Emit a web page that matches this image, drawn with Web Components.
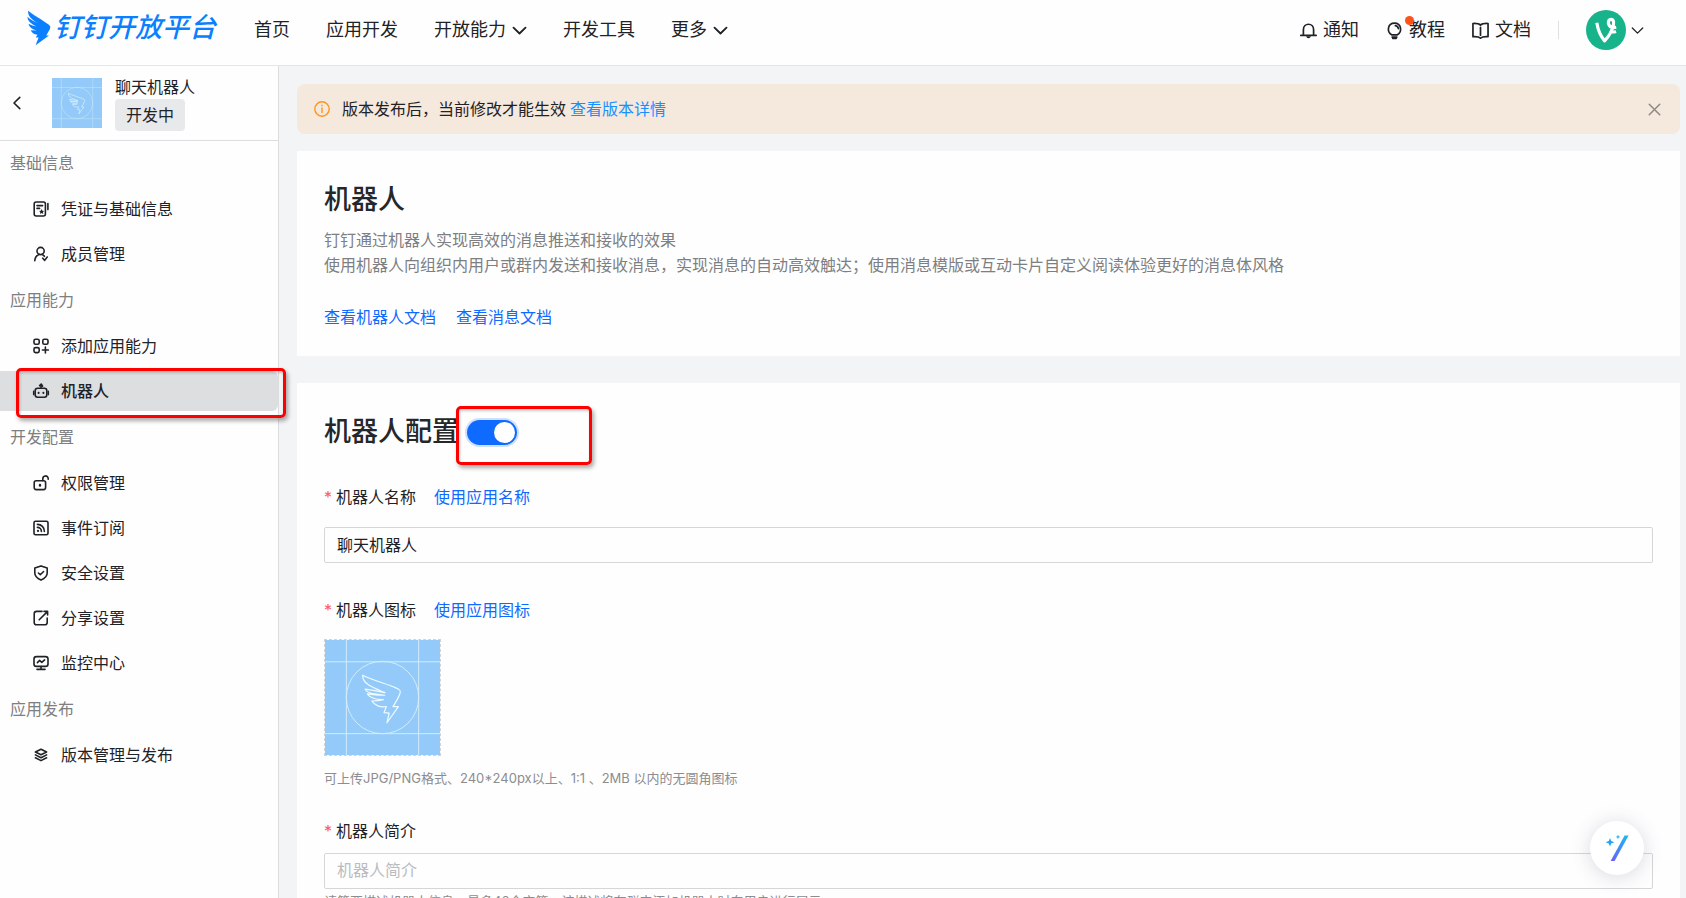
<!DOCTYPE html>
<html lang="zh-CN">
<head>
<meta charset="utf-8">
<title>钉钉开放平台 - 机器人</title>
<style>
html,body{margin:0;height:100%}
body{font-family:Inter,"Noto Sans CJK SC",sans-serif;font-size:16px;line-height:24px;color:#1f2226;background:#f3f4f5;
--blue:#0f6bff;--muted:#7d7f82;--line:#dcdddf}
</style>
</head>
<body>
<open-platform-app></open-platform-app>
<script>
const define = (name, html, setup) => {
  const template = document.createElement('template');
  template.innerHTML = '<style>*,::before,::after{box-sizing:border-box}a{text-decoration:none;color:inherit}button{font:inherit;color:inherit;border:0;background:none;padding:0;cursor:pointer}[hidden]{display:none!important}</style>' + html;
  customElements.define(name, class extends HTMLElement {
    connectedCallback() {
      if (this.shadowRoot) return;
      this.attachShadow({mode: 'open'}).append(template.content.cloneNode(true));
      if (setup) setup(this, this.shadowRoot);
    }
  });
};

const ICONS = {
  credential: '<rect x="1.2" y="1" width="11.2" height="14" rx="2"/><path d="M4 4.6h5.6M4 7.4h2.6M14.9 2.6v6"/><path d="M8.6 8l.8 1.7 1.8.2-1.3 1.2.4 1.8-1.7-.9-1.6.9.3-1.8-1.3-1.2 1.8-.2z" fill="currentColor" stroke="none"/>',
  member: '<circle cx="7.6" cy="5" r="3.6"/><path d="M1.8 14.6c.3-3.4 1.9-5.4 4.4-6.2M9.2 8.4c1 .4 1.7 1 2.2 1.9M9.8 12.2l1.9 2.2 2.5-3.4"/>',
  ability: '<rect x="1" y="1.2" width="5.2" height="5" rx="1.5"/><rect x="9.8" y="1.2" width="5.2" height="5" rx="1.5"/><rect x="1" y="9.6" width="5.2" height="5" rx="1.5"/><path d="M12.4 9v6M9.4 12h6"/>',
  robot: '<rect x="2.2" y="5.2" width="11.6" height="9" rx="2.4"/><path d="M.7 8.4v3.2M15.3 8.4v3.2M8 5V3.4M6.6 2.6L8.2 1l1.4 2.2"/><path d="M5.6 9.7v.2M10.4 9.7v.2" stroke-width="2"/>',
  unlock: '<rect x="1.2" y="5.8" width="11.4" height="8.8" rx="2"/><path d="M9.8 5.6V3.8c0-3.8 5.4-3.8 5.4-.2v.6"/><path d="M7 10v.5" stroke-width="2.4"/>',
  feed: '<rect x="1" y="1.2" width="14" height="13.6" rx="1.6"/><path d="M4.4 4.4c4 0 7 3 7 7M4.4 7.4c2.3 0 4 1.8 4 4"/><path d="M5 10.8v.2" stroke-width="2.2"/>',
  shield: '<path d="M8 .9l6.2 2.2v5c0 3.2-2.6 5.4-6.2 7-3.600-1.600-6.200-3.800-6.200-7v-5z"/><path d="M5.400 8l1.900 1.700 3.300-3.200"/>',
  share: '<path d="M9 1.400H3.600C2 1.400 1.200 2.200 1.200 3.800v8.600c0 1.500.8 2.300 2.400 2.300h8.200c1.600 0 2.400-.8 2.400-2.300V8M6.200 9.800L14.400 1.600M11 1.400h3.600V5"/>',
  monitor: '<rect x="1" y="1.600" width="14" height="9.800" rx="2.400"/><path d="M8 11.600v2.600M4 14.400h8M4.400 7.600L6.600 5.400l2.200 2 2.800-2.600"/>',
  layers: '<path d="M8 2.200l5.600 2.800L8 7.800 2.400 5z"/><path d="M2.400 7.900L8 10.700l5.600-2.800M2.400 10.800L8 13.600l5.600-2.800"/>',
  back: '<path d="M10.800 2.400L5 8l5.800 5.600"/>',
  down: '<path d="M1.600 5l6.400 6.200L14.400 5"/>',
  close: '<path d="M2.400 2.400l11.200 11.200M13.600 2.400L2.400 13.600"/>',
  info: '<circle cx="8" cy="8" r="7.200"/><path d="M8 7v4.600M8 4.300v.4"/>',
  bell: '<path d="M3.200 12.400V7.200c0-6.800 9.600-6.800 9.600 0v5.200M.8 12.600h14.400"/><path d="M5.800 13.400h4.400c-.4 2.400-4 2.400-4.400 0z" fill="currentColor" stroke="none"/>',
  bulb: '<path d="M5.600 12.200C.2 9.400 1.600 1 8 1s7.800 8.400 2.400 11.200z"/><path d="M8.800 3.400c1.700.3 2.600 1.200 2.900 2.800M5.800 14.200h4.400"/><path d="M6.400 15.400h3.200"/>',
  book: '<path d="M8 3C6.600 1.600 4.400 1.200.9 1.400v12.400c3.300-.2 5.700.1 7.100 1.300 1.400-1.200 3.800-1.500 7.100-1.300V1.400C11.600 1.200 9.400 1.600 8 3zM8 5v7.400"/>'
};

define('dt-icon', `
<style>:host{display:inline-flex;flex:none;width:16px;height:16px}svg{width:100%;height:100%;overflow:visible;stroke-width:var(--stroke,1.6)}</style>
<svg viewBox="0 0 16 16" fill="none" stroke="currentColor" stroke-linecap="round" stroke-linejoin="round" aria-hidden="true"></svg>`,
(el, root) => {
  root.querySelector('svg').innerHTML = ICONS[el.getAttribute('name')] || '';
});

define('dt-app-art', `
<style>:host{display:block;background:#93caf9}svg{display:block;width:100%;height:100%}</style>
<svg viewBox="0 0 116 116" fill="none" stroke="#d3edf8" role="img" aria-label="应用图标">
<path d="M21.500 0v116M94.500 0v116M0 22h116M0 94.500h116" stroke-width="1"/>
<circle cx="58" cy="58" r="36.500"/>
<path stroke="#f0fbff" stroke-width="1.200" stroke-linejoin="round" d="M38 35.500C47 40 61 44 72 48.500c4 1.600 4.600 3 3.600 5.500C74 59 71 63 68.600 67.200H74L62.500 83.500l2.200-9.800-5.200-.4 2.400-6.200c-6 1-12-1-14.600-5.600 5-.2 8-.6 11.600-1.400-7 .4-14.200-2-16.200-5.800 7 1.400 12 1.400 17.600 1.400C51 54.500 42 54 40.500 49.500c7 .8 13 2.200 20 3.600C51 49 37.500 45 38 35.500z"/>
</svg>`);

define('dt-logo', `
<style>
:host{display:block}
a{display:flex;align-items:center;gap:3px;color:#0a80ff}
svg{width:24px;height:36px;flex:none}
span{font-size:27px;line-height:40px;font-weight:500;font-style:italic;white-space:nowrap}
</style>
<a href="#"><svg viewBox="0 0 24 36" fill="currentColor" aria-hidden="true"><path d="M1.200.4C4.400 4.400 15 9 21.600 14.600c1.900 1.600 2.200 2.800 1.200 4.600l-3.600 6.200h2.800L8.600 35.200l3-7.600-2.800-.2 1.600-2.600C7 24.400 4.400 22.400 3.800 20.200l6 .4C5.400 19.600 2 17 1.600 13.800c2.400 1.400 5.400 2.200 8 2.600C4 14 .6 11 .4 6.800c3 3 7 5 10.600 6.400C4.600 9.600.4 5.600 1.200.4z"/></svg><span>钉钉开放平台</span></a>`);

define('dt-nav-link', `
<style>
:host{display:block}
a{display:flex;align-items:center;gap:6px;font-size:18px;line-height:26px;white-space:nowrap;position:relative}
dt-icon{width:15px;height:15px;--stroke:2}
.lead{width:17px;height:17px;--stroke:1.6}
i{position:absolute;left:19px;top:-1px;width:9px;height:9px;border-radius:50%;background:#ff5219}
</style>
<a href="#"><dt-icon class="lead" hidden></dt-icon><slot></slot><dt-icon class="arrow" name="down" hidden></dt-icon><i hidden></i></a>`,
(el, root) => {
  const lead = root.querySelector('.lead');
  if (el.hasAttribute('icon')) {
    const icon = document.createElement('dt-icon');
    icon.className = 'lead';
    icon.setAttribute('name', el.getAttribute('icon'));
    lead.replaceWith(icon);
  }
  root.querySelector('.arrow').hidden = !el.hasAttribute('menu');
  root.querySelector('i').hidden = !el.hasAttribute('dot');
});

define('dt-header', `
<style>
:host{display:block;background:#fefefe;border-bottom:1px solid #e4e6e8}
header{display:flex;align-items:center;height:65px;padding:0 42px 5px 27px}
dt-logo{padding-bottom:5px}
nav{display:flex;gap:36px;margin-left:38px}
.tools{display:flex;align-items:center;gap:27px;margin-left:auto}
.rule{width:1px;height:18px;background:#dfe0e2}
.user{display:flex;align-items:center;gap:5px}
.user svg{width:40px;height:40px}
.user dt-icon{width:13px;height:13px}
</style>
<header>
<dt-logo></dt-logo>
<nav><dt-nav-link>首页</dt-nav-link><dt-nav-link>应用开发</dt-nav-link><dt-nav-link menu>开放能力</dt-nav-link><dt-nav-link>开发工具</dt-nav-link><dt-nav-link menu>更多</dt-nav-link></nav>
<div class="tools">
<dt-nav-link icon="bell">通知</dt-nav-link><dt-nav-link icon="bulb" dot>教程</dt-nav-link><dt-nav-link icon="book">文档</dt-nav-link>
<span class="rule"></span>
<button class="user" aria-label="账号"><svg viewBox="0 0 40 40" aria-hidden="true"><circle cx="20" cy="20" r="20" fill="#17b38a"/><path d="M10.800 12.800c1.200 7.200 3.600 13.400 7.800 18 4.400-4.400 7.400-9.800 8.800-15.800.8-3.800-.4-5.600-2.300-5.600-2.600 0-3.300 3-2.300 5.200 1.200 2.600 4 3.400 7.400 2.600M23.600 21.400c2 .8 4.200.8 6.400 0" fill="none" stroke="#fff" stroke-width="3.200" stroke-linejoin="round"/></svg><dt-icon name="down"></dt-icon></button>
</div>
</header>`);

define('dt-app-card', `
<style>
:host{display:block;border-bottom:1px solid var(--line)}
.card{display:flex;align-items:center;height:74px;padding:0 9px}
.back{display:flex;margin-right:27px}
dt-app-art{width:50px;height:50px}
.text{display:flex;flex-direction:column;align-items:flex-start;margin-left:13px}
.badge{padding:4px 11px;border-radius:4px;background:#e7e9eb}
</style>
<div class="card"><button class="back" aria-label="返回"><dt-icon name="back"></dt-icon></button><dt-app-art></dt-app-art>
<div class="text"><span><slot></slot></span><span class="badge"><slot name="status"></slot></span></div></div>`);

define('dt-nav-group', `
<style>
:host{display:block}
h2{margin:0;padding:0 10px;font-size:16px;font-weight:400;line-height:45px;height:47px;color:var(--muted)}
</style>
<h2></h2><nav><slot></slot></nav>`,
(el, root) => { root.querySelector('h2').textContent = el.getAttribute('heading'); });

define('dt-nav-item', `
<style>
:host{display:block;padding:1px 0 4px;position:relative}
a{display:flex;align-items:center;gap:12px;height:40px;padding-left:33px;border-radius:0 6px 6px 0}
:host([current]) a{background:#dddee0;font-weight:500}
:host([current])::after{content:"";box-sizing:border-box;position:absolute;left:16px;right:-8px;top:-2px;height:50px;border:3px solid #f00;border-radius:5px;box-shadow:2px 3px 4px #0005,inset 1px 2px 3px #0003;pointer-events:none}
</style>
<a href="#"></a>`,
(el, root) => {
  root.querySelector('a').innerHTML = '<dt-icon name="' + el.getAttribute('icon') + '"></dt-icon><slot></slot>';
  if (el.hasAttribute('current')) root.querySelector('a').setAttribute('aria-current', 'page');
});

define('dt-sidebar', `
<style>
:host{display:block;width:279px;box-sizing:border-box;flex:none;background:#fefefe;border-right:1px solid var(--line);position:relative;z-index:1}
</style>
<dt-app-card>聊天机器人<span slot="status">开发中</span></dt-app-card>
<dt-nav-group heading="基础信息"><dt-nav-item icon="credential">凭证与基础信息</dt-nav-item><dt-nav-item icon="member">成员管理</dt-nav-item></dt-nav-group>
<dt-nav-group heading="应用能力"><dt-nav-item icon="ability">添加应用能力</dt-nav-item><dt-nav-item icon="robot" current>机器人</dt-nav-item></dt-nav-group>
<dt-nav-group heading="开发配置"><dt-nav-item icon="unlock">权限管理</dt-nav-item><dt-nav-item icon="feed">事件订阅</dt-nav-item><dt-nav-item icon="shield">安全设置</dt-nav-item><dt-nav-item icon="share">分享设置</dt-nav-item><dt-nav-item icon="monitor">监控中心</dt-nav-item></dt-nav-group>
<dt-nav-group heading="应用发布"><dt-nav-item icon="layers">版本管理与发布</dt-nav-item></dt-nav-group>`);

define('dt-alert', `
<style>
:host{display:flex;align-items:center;height:50px;padding:0 18px 0 17px;border-radius:8px;background:#f5e8dd}
.mark{color:#ff9420;--stroke:1.4}
p{flex:1;margin:0 12px}
button{display:flex;color:#8f8984}
button dt-icon{width:15px;height:15px}
</style>
<dt-icon class="mark" name="info"></dt-icon><p><slot></slot></p><button aria-label="关闭"><dt-icon name="close"></dt-icon></button>`);

define('dt-panel', `
<style>:host{display:block;background:#fefefe;padding:29px 27px 27px}</style><slot></slot>`);

define('dt-switch', `
<style>
:host{display:flex;position:relative}
input{appearance:none;display:flex;align-items:center;margin:0;width:50px;height:25px;border-radius:13px;background:#c5c8cc;padding:2px;cursor:pointer}
input::before{content:"";width:21px;height:21px;border-radius:50%;background:#fff}
input:checked{background:var(--blue);justify-content:flex-end;box-shadow:0 0 0 2px #cfe0ff}
:host([marked])::after{content:"";position:absolute;left:-11px;top:-14px;width:136px;height:59px;box-sizing:border-box;border:3px solid #f00;border-radius:5px;box-shadow:2px 3px 4px #0005,inset 1px 2px 3px #0003;pointer-events:none}
</style>
<input type="checkbox" role="switch" aria-label="机器人配置" checked>`);

const fieldHead = `
<style>
:host{display:block}
.head{display:flex;gap:18px}
.head label::before{content:"*";color:#ff5a5c;margin-right:4px}
.head a{color:var(--blue)}
.hint{margin:0;font-size:13px;line-height:20px;color:#8b8d90}
</style>
<div class="head"><label for="control"></label><a href="#"></a></div>`;
const fillHead = (el, root) => {
  root.querySelector('label').textContent = el.getAttribute('label');
  const link = root.querySelector('.head a');
  link.textContent = el.getAttribute('action') || '';
  link.hidden = !el.hasAttribute('action');
  const hint = root.querySelector('.hint');
  hint.textContent = el.getAttribute('hint') || '';
  hint.hidden = !el.hasAttribute('hint');
};

define('dt-text-field', fieldHead + `
<style>
input{display:block;width:100%;height:36px;margin-top:18px;padding:0 12px 2px;border:1px solid #d5d6d8;border-radius:2px;background:#fefefe;font:inherit;color:inherit;outline:0}
:host([compact]) input{margin-top:10px}
input::placeholder{color:#babcbf;opacity:1}
.hint{margin-top:2px}
</style>
<input id="control" type="text"><p class="hint"></p>`,
(el, root) => {
  fillHead(el, root);
  const input = root.querySelector('input');
  input.value = el.getAttribute('value') || '';
  input.placeholder = el.getAttribute('placeholder') || '';
});

define('dt-image-field', fieldHead + `
<style>
button{display:block;width:117px;height:117px;margin-top:17px;border:1px dashed #cfd3d8;overflow:hidden}
dt-app-art{width:100%;height:100%}
.hint{margin-top:12px}
</style>
<button id="control" type="button"><dt-app-art></dt-app-art></button><p class="hint"></p>`, fillHead);

define('dt-assistant', `
<style>
:host{position:fixed;right:42px;bottom:23px}
button{display:flex;align-items:center;justify-content:center;width:54px;height:54px;border-radius:50%;background:#fff;box-shadow:0 2px 20px #3c466e33}
svg{width:24px;height:30px}
</style>
<button aria-label="智能助手"><svg viewBox="0 0 24 30" aria-hidden="true"><defs><linearGradient id="wand" x1="0" y1="0" x2="0" y2="1"><stop stop-color="#1fb5f5"/><stop offset="1" stop-color="#6a62f5"/></linearGradient></defs><path d="M19.600 2.600h4L9.600 28H5.600z" fill="url(#wand)"/><path d="M5 5l1.200 3L9.400 9.200 6.200 10.400 5 13.400 3.800 10.400.6 9.200 3.800 8z" fill="#23a5f2"/><path d="M13 1.600l.7 1.600 1.700.7-1.700.7L13 6.200l-.7-1.600-1.700-.7 1.700-.7z" fill="#27b4f0"/></svg></button>`);

define('dt-robot-page', `
<style>
:host{display:block;padding:18px 6px 27px 18px}
dt-panel+dt-panel{margin-top:27px}
dt-alert{margin-bottom:17px}
dt-alert a{color:#1890ff;margin-left:4px}
h1,h2{margin:0;font-size:27px;line-height:40px;font-weight:500;color:#25272a}
.desc{margin:8px 0 27px;line-height:25px;color:var(--muted)}
.links{display:flex;gap:20px;color:var(--blue)}
.title{display:flex;align-items:center;gap:8px;margin-bottom:33px}
dt-text-field{margin-bottom:35px}
dt-image-field{margin-bottom:31px}
</style>
<dt-alert>版本发布后，当前修改才能生效<a href="#">查看版本详情</a></dt-alert>
<dt-panel><h1>机器人</h1>
<p class="desc">钉钉通过机器人实现高效的消息推送和接收的效果<br>使用机器人向组织内用户或群内发送和接收消息，实现消息的自动高效触达；使用消息模版或互动卡片自定义阅读体验更好的消息体风格</p>
<div class="links"><a href="#">查看机器人文档</a><a href="#">查看消息文档</a></div></dt-panel>
<dt-panel><div class="title"><h2>机器人配置</h2><dt-switch marked></dt-switch></div>
<dt-text-field label="机器人名称" action="使用应用名称" value="聊天机器人"></dt-text-field>
<dt-image-field label="机器人图标" action="使用应用图标" hint="可上传JPG/PNG格式、240*240px以上、1:1 、2MB 以内的无圆角图标"></dt-image-field>
<dt-text-field compact label="机器人简介" placeholder="机器人简介" hint="请简要描述机器人信息，最多40个字符，该描述将在群内添加机器人时向用户进行展示"></dt-text-field></dt-panel>`);

define('open-platform-app', `
<style>
:host{display:flex;flex-direction:column;height:100vh}
.body{display:flex;flex:1;min-height:0}
main{flex:1;min-width:0;overflow-y:auto;scrollbar-width:none}
</style>
<dt-header></dt-header>
<div class="body"><dt-sidebar></dt-sidebar><main><dt-robot-page></dt-robot-page></main></div>
<dt-assistant></dt-assistant>`);
</script>
</body>
</html>
